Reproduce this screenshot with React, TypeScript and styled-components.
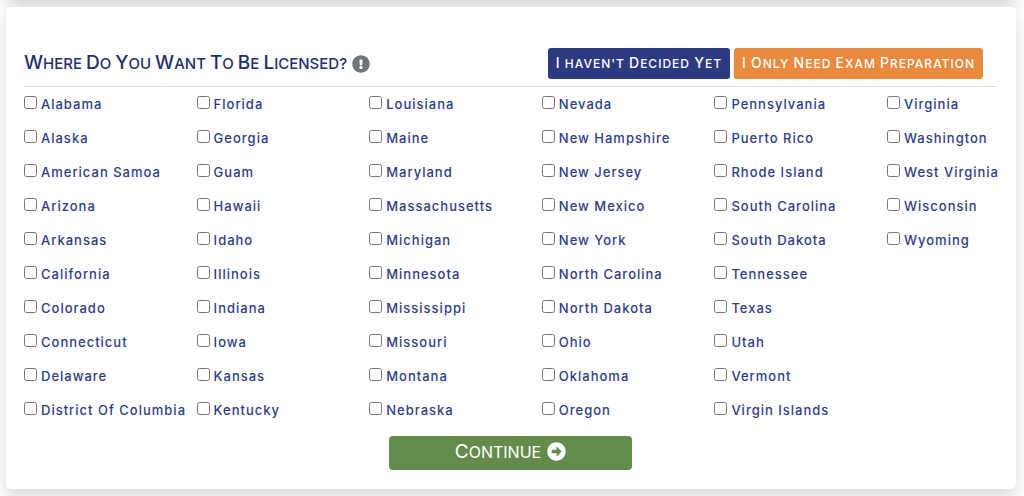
import React, { Fragment, useState } from "react";
import styled, { createGlobalStyle } from "styled-components";
import { FaArrowAltCircleRight, FaExclamationCircle } from "react-icons/fa";

const GlobalStyle = createGlobalStyle`
  *, *::before, *::after { box-sizing: border-box; }
  body {
    margin: 0;
    background: #fff;
    color: #2e3c88;
    font-family: Inter, "Liberation Sans", sans-serif;
  }
`;

const Page = styled.main`
  padding: 0 8px 7px 6px;
  overflow: hidden;
`;

const panelShadow = "0 8px 16px rgba(0, 0, 0, 0.15)";

const PreviousPanel = styled.div`
  height: 40px;
  margin: -40px 0 7px;
  border-radius: 5px;
  box-shadow: ${panelShadow};
`;

const Panel = styled.form`
  display: flex;
  flex-direction: column;
  padding: 41px 19px 19px 18px;
  border-radius: 5px;
  background: #fff;
  box-shadow: ${panelShadow};
`;

const Header = styled.header`
  display: flex;
  align-items: center;
  justify-content: space-between;
  padding: 0 14px 7px 0;
  border-bottom: 1px solid #dfdfdf;
`;

/* Inter carries only part of a small-caps set, so capitals are sized per word. */
const Words = styled.span<{ $small: number }>`
  font-size: ${({ $small }) => $small}px;
  text-transform: uppercase;
`;

const Word = styled.span<{ $cap: number; $small: number; $raised: boolean }>`
  display: inline-block;

  &::first-letter {
    font-size: ${({ $cap, $small, $raised }) => ($raised ? $cap : $small)}px;
  }
`;

function SmallCaps({ text, cap, small }: { text: string; cap: number; small: number }) {
  return (
    <Words $small={small}>
      {text.split(" ").map((word, index) => (
        <Fragment key={index}>
          {index > 0 && " "}
          <Word $cap={cap} $small={small} $raised={/^[A-Z]/.test(word)}>{word}</Word>
        </Fragment>
      ))}
    </Words>
  );
}

const Title = styled.h1`
  display: flex;
  align-items: center;
  gap: 5px;
  margin: 0;
  color: #22306b;
  font-size: 19px;
  font-weight: 500;
  line-height: 28px;

  svg { color: #6c757d; font-size: 18px; }
`;

const Actions = styled.div`
  display: flex;
  gap: 4px;
`;

const ActionButton = styled.button<{ $color: string }>`
  height: 31px;
  padding: 0 8px 1px;
  border: 0;
  border-radius: 3px;
  background: ${({ $color }) => $color};
  color: #fff;
  font: 500 14px/28px Inter, "Liberation Sans", sans-serif;
  letter-spacing: 1px;
  white-space: nowrap;
`;

const StateGrid = styled.div`
  display: grid;
  grid-template-columns: repeat(5, minmax(0, 1fr)) 110px;
  grid-template-rows: repeat(10, 34px);
  grid-auto-flow: column;
`;

const StateOption = styled.label`
  display: flex;
  align-items: center;
  gap: 4px;
  font-size: 13px;
  font-weight: 500;
  letter-spacing: 1px;
  white-space: nowrap;
`;

const Checkbox = styled.input`
  width: 13px;
  height: 13px;
  margin: 0 0 3px;
`;

const ContinueButton = styled.button`
  display: flex;
  align-items: center;
  justify-content: center;
  align-self: center;
  gap: 6px;
  width: 25%;
  height: 34px;
  margin-top: 9px;
  padding: 0 0 3px;
  border: 0;
  border-radius: 4px;
  background: #628b4c;
  color: #fff;
  font: 400 19px/28px Inter, "Liberation Sans", sans-serif;

  svg { font-size: 19px; }
`;

const STATES = [
  "Alabama", "Alaska", "American Samoa", "Arizona", "Arkansas",
  "California", "Colorado", "Connecticut", "Delaware", "District Of Columbia",
  "Florida", "Georgia", "Guam", "Hawaii", "Idaho",
  "Illinois", "Indiana", "Iowa", "Kansas", "Kentucky",
  "Louisiana", "Maine", "Maryland", "Massachusetts", "Michigan",
  "Minnesota", "Mississippi", "Missouri", "Montana", "Nebraska",
  "Nevada", "New Hampshire", "New Jersey", "New Mexico", "New York",
  "North Carolina", "North Dakota", "Ohio", "Oklahoma", "Oregon",
  "Pennsylvania", "Puerto Rico", "Rhode Island", "South Carolina", "South Dakota",
  "Tennessee", "Texas", "Utah", "Vermont", "Virgin Islands",
  "Virginia", "Washington", "West Virginia", "Wisconsin", "Wyoming",
];

export default function App() {
  const [selected, setSelected] = useState<string[]>([]);

  const toggle = (name: string) =>
    setSelected((current) =>
      current.includes(name) ? current.filter((s) => s !== name) : [...current, name],
    );

  return (
    <>
      <GlobalStyle />
      <Page>
        <PreviousPanel />
        <Panel onSubmit={(event) => event.preventDefault()}>
          <Header>
            <Title>
              <SmallCaps text="Where Do You Want To Be Licensed?" cap={19} small={15} />
              <FaExclamationCircle aria-hidden />
            </Title>
            <Actions>
              <ActionButton type="button" $color="#2c3a82">
                <SmallCaps text="I haven't Decided Yet" cap={14} small={12} />
              </ActionButton>
              <ActionButton type="button" $color="#e98a3e">
                <SmallCaps text="I Only Need Exam Preparation" cap={14} small={12} />
              </ActionButton>
            </Actions>
          </Header>
          <StateGrid>
            {STATES.map((name) => {
              const id = name.toLowerCase().replace(/ /g, "-");
              return (
                <StateOption key={id} htmlFor={id}>
                  <Checkbox
                    type="checkbox"
                    id={id}
                    checked={selected.includes(name)}
                    onChange={() => toggle(name)}
                  />
                  {name}
                </StateOption>
              );
            })}
          </StateGrid>
          <ContinueButton type="submit">
            <SmallCaps text="Continue" cap={19} small={16} />
            <FaArrowAltCircleRight aria-hidden />
          </ContinueButton>
        </Panel>
      </Page>
    </>
  );
}
